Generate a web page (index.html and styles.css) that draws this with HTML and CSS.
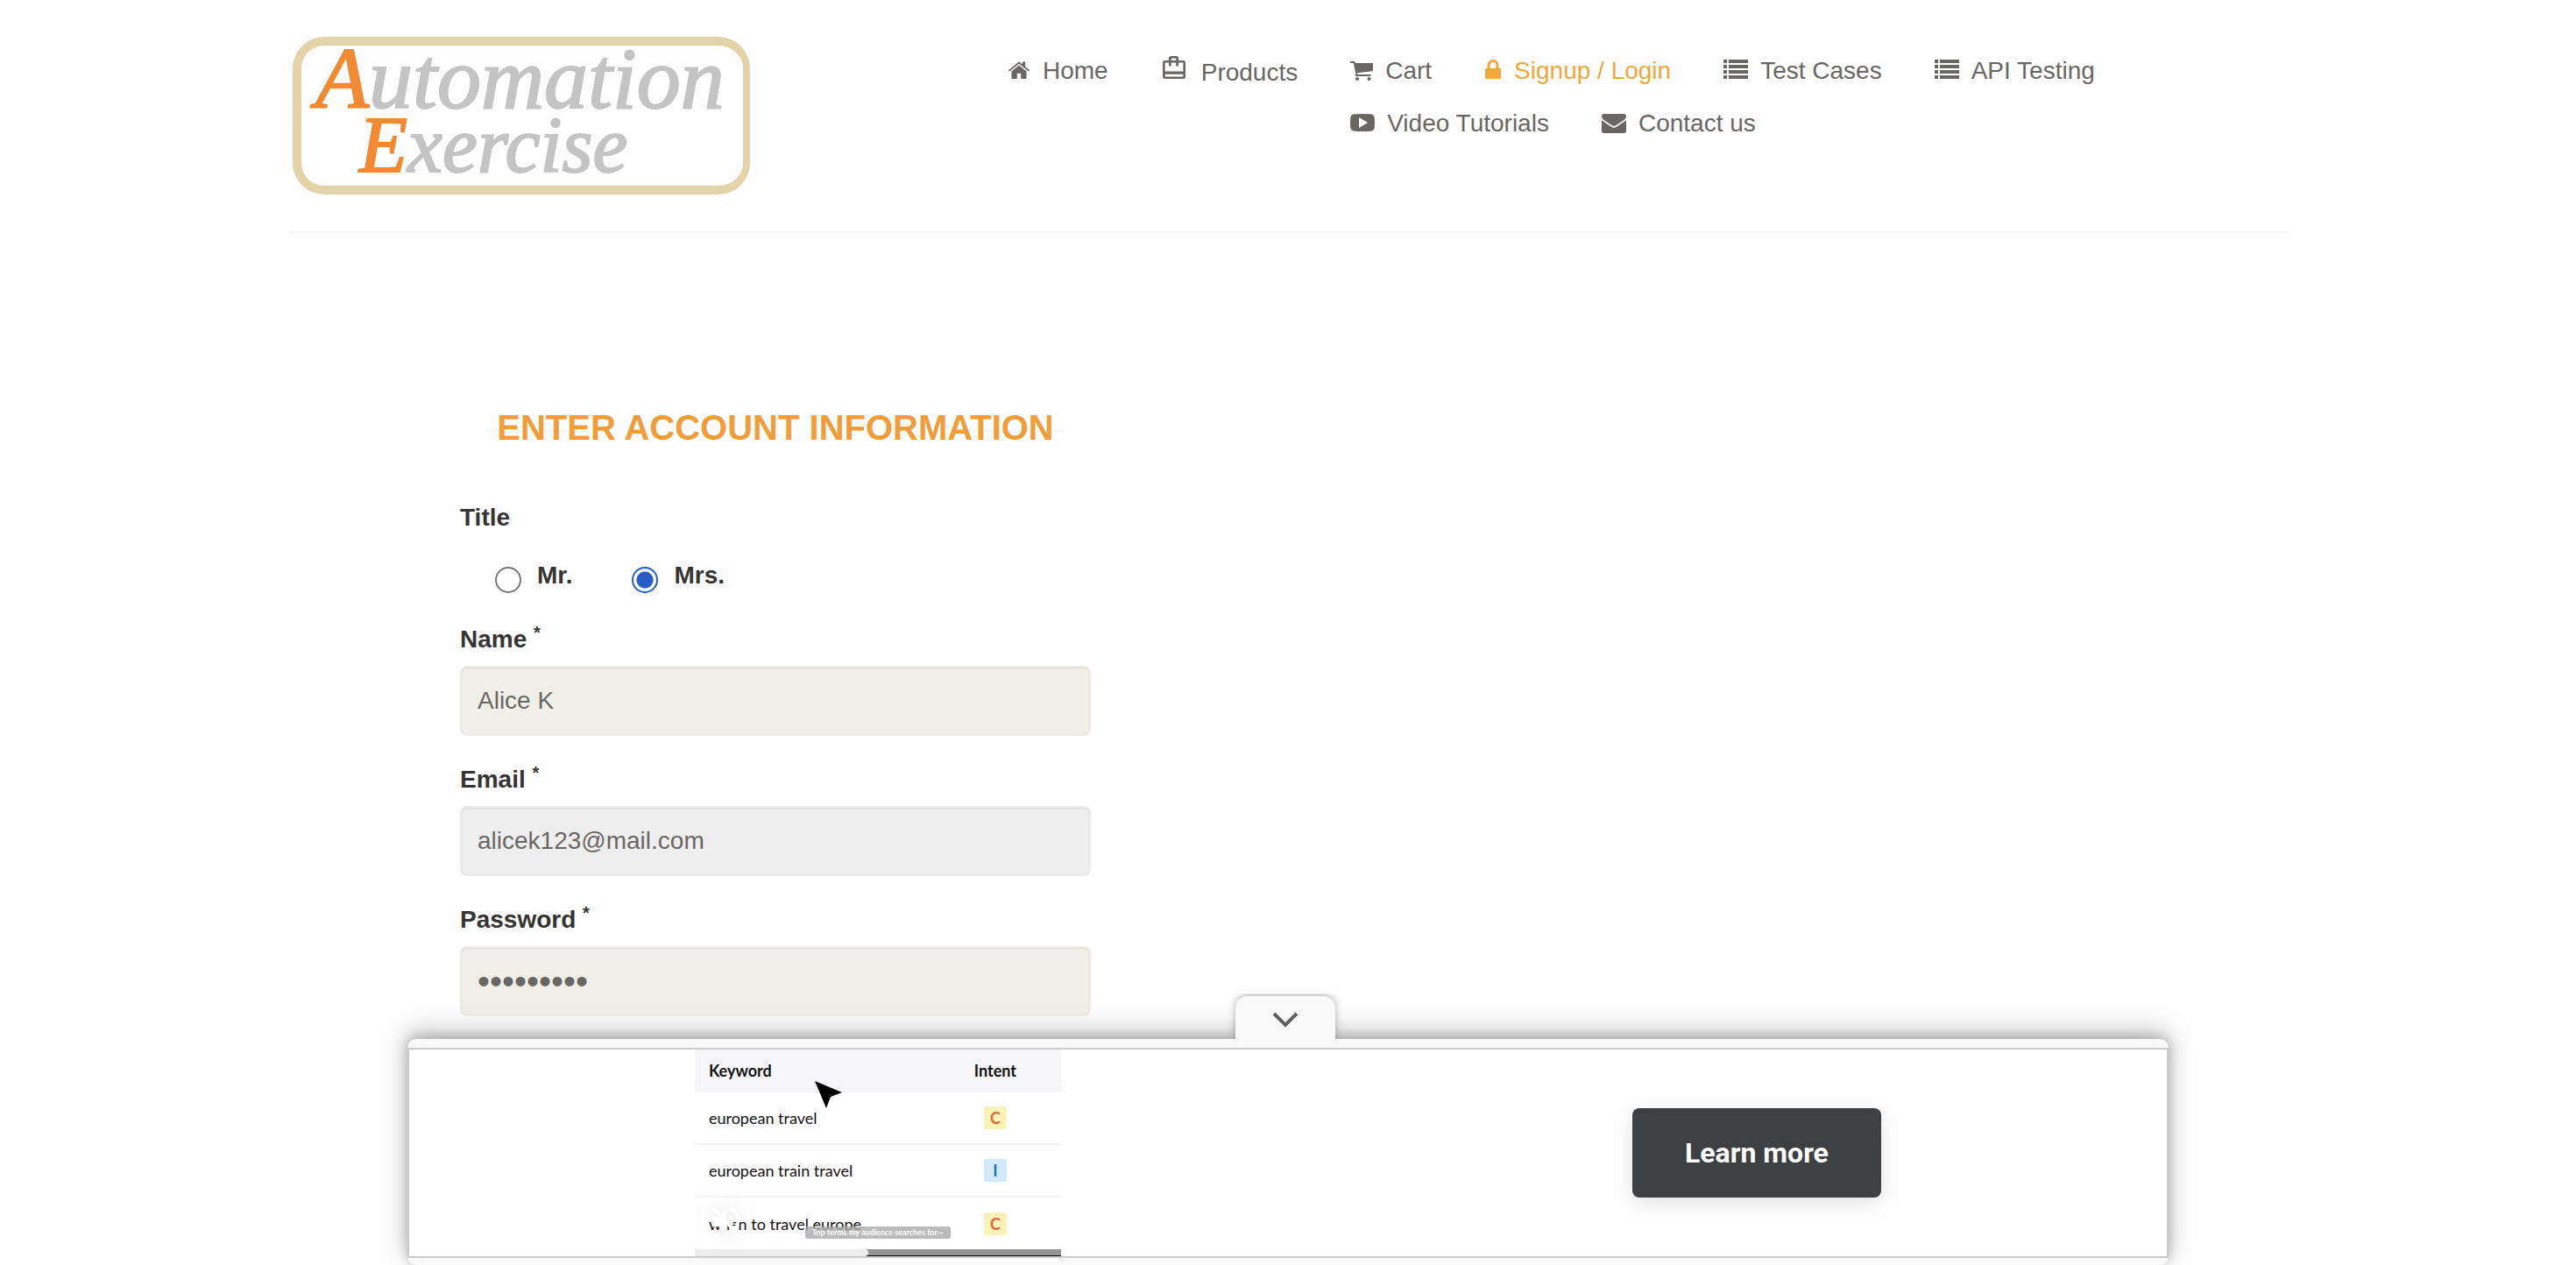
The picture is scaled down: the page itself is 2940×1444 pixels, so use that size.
FILE: index.html
```html
<!DOCTYPE html>
<html lang="en">
<head>
<meta charset="utf-8">
<title>Automation Exercise - Signup</title>
<link rel="stylesheet" href="styles.css">
</head>
<body>
<header class="container">
  <div class="header-row">
    <a class="logo" href="#" aria-label="Automation Exercise">
      <span class="logo-line"><span class="logo-cap">A</span>utomation</span>
      <span class="logo-line logo-second"><span class="logo-cap">E</span>xercise</span>
    </a>
    <nav class="shop-menu">
      <ul>
        <li><a href="#"><svg class="w26" viewBox="0 0 26 28"><path d="M13 8.500L4.500 15.500V23.200Q4.500 24 5.300 24H10.800V17.800H15.200V24H20.700Q21.500 24 21.500 23.200V15.500ZM1 14.200L13 4.200L16.800 7.400V4.500H20.200V10.200L25 14.200L23.800 15.600L13 6.700L2.200 15.600Z"/></svg>Home</a></li>
        <li class="tall"><a href="#"><svg class="w32" viewBox="0 0 32 28"><path fill-rule="evenodd" d="M9 6V3.500Q9 1 11.500 1H17.500Q20 1 20 3.500V6H25.500Q28 6 28 8.500V24.500Q28 27 25.500 27H4.500Q2 27 2 24.500V8.500Q2 6 4.500 6ZM11.700 6H17.300V3.500H11.700ZM4.600 21.700V24.400H25.400V21.700ZM4.600 8.600V18.500H25.400V8.600H20V12.500H17.300V8.600H11.700V12.500H9V8.600Z"/></svg>Products</a></li>
        <li><a href="#"><svg class="w26" viewBox="0 0 26 28"><path d="M0 4H4.500Q5.600 4 5.900 6H26V14Q26 15 25 15.200L8 17.200L8.400 19H23.500V21H6.700Q5.800 21 6 19.800L6.400 18.300L3.700 6H0Z"/><circle cx="8" cy="24" r="2"/><circle cx="21.500" cy="24" r="2"/></svg>Cart</a></li>
        <li><a class="active" href="#"><svg class="w20" viewBox="0 0 20 28"><path fill-rule="evenodd" d="M1 13Q1 12 2 12H3.500V8.500A6.500 6.500 0 0 1 16.500 8.500V12H18Q19 12 19 13V23Q19 24 18 24H2Q1 24 1 23ZM6.500 12H13.500V8.500A3.500 3.500 0 0 0 6.500 8.500Z"/></svg>Signup / Login</a></li>
        <li><a href="#"><svg class="w28" viewBox="0 0 28 28"><path d="M0 2H4V6H0ZM6 2H28V6H6ZM0 8H4V12H0ZM6 8H28V12H6ZM0 14H4V18H0ZM6 14H28V18H6ZM0 20H4V24H0ZM6 20H28V24H6Z"/></svg>Test Cases</a></li>
        <li><a href="#"><svg class="w28" viewBox="0 0 28 28"><path d="M0 2H4V6H0ZM6 2H28V6H6ZM0 8H4V12H0ZM6 8H28V12H6ZM0 14H4V18H0ZM6 14H28V18H6ZM0 20H4V24H0ZM6 20H28V24H6Z"/></svg>API Testing</a></li>
        <li><a href="#"><svg class="w28" viewBox="0 0 28 28"><path fill-rule="evenodd" d="M5 4.300Q14 3.700 23 4.300Q27.300 4.500 27.700 8.500Q28.200 14 27.700 19.500Q27.300 23.500 23 23.700Q14 24.300 5 23.700Q.7 23.500 .3 19.500Q-.2 14 .3 8.500Q.7 4.500 5 4.300ZM10 8V20L20 14Z"/></svg>Video Tutorials</a></li>
        <li><a href="#"><svg class="w28" viewBox="0 0 28 28"><path d="M2.500 4H25.500Q28 4 28 6.500Q28 9 25.500 11L16.500 17Q14 18.700 11.500 17L2.500 11Q0 9 0 6.500Q0 4 2.500 4ZM0 11.200L11 18.800Q14 20.800 17 18.800L28 11.200V23.500Q28 26 25.500 26H2.500Q0 26 0 23.500Z"/></svg>Contact us</a></li>
      </ul>
    </nav>
  </div>
</header>

<main class="container">
  <form class="login-form" action="#">
    <h2><b>Enter Account Information</b></h2>
    <fieldset>
      <legend>Title</legend>
      <div class="radios">
        <label><input type="radio" name="title">Mr.</label>
        <label><input type="radio" name="title" checked>Mrs.</label>
      </div>
    </fieldset>
    <div class="form-group">
      <label for="name">Name <sup>*</sup></label>
      <input id="name" type="text" value="Alice K">
    </div>
    <div class="form-group">
      <label for="email">Email <sup>*</sup></label>
      <input id="email" type="text" value="alicek123@mail.com" disabled>
    </div>
    <div class="form-group">
      <label for="password">Password <sup>*</sup></label>
      <input id="password" type="password" value="abcdefghi">
    </div>
  </form>
</main>

<aside class="anchor-ad">
  <button class="ad-toggle" type="button" aria-label="Collapse">
    <svg viewBox="0 0 32 24"><path d="M3 4L16 17L29 4"/></svg>
  </button>
  <div class="ad-body">
    <div class="video">
      <table>
        <thead><tr><th>Keyword</th><th class="intent">Intent</th></tr></thead>
        <tbody>
          <tr><td>european travel</td><td class="intent"><span class="badge">C</span></td></tr>
          <tr><td>european train travel</td><td class="intent"><span class="badge info">I</span></td></tr>
          <tr><td>when to travel europe</td><td class="intent"><span class="badge">C</span></td></tr>
        </tbody>
      </table>
      <div class="track"><div class="buffer"></div></div>
      <svg class="cursor" viewBox="0 0 32 32"><path d="M0 0L31 13L18 18L13 31Z"/></svg>
      <svg class="mute" viewBox="0 0 36 36"><path d="M2 13H9L18 4V32L9 24H2Z"/><path class="wave" d="M22 12Q26 18 22 24M22 4Q32 8 31 18Q31 24 28 27M3 3L31 33"/></svg>
      <div class="subtitle">Top terms my audience searches for—</div>
    </div>
    <button class="learn" type="button">Learn more</button>
  </div>
</aside>
</body>
</html>
```
FILE: styles.css
```css
* { box-sizing: border-box; }

body {
  margin: 0;
  background: #fefefe;
  color: #363432;
  font-family: "Liberation Sans", Arial, sans-serif;
  font-size: 28px;
  line-height: 40px;
}

.container {
  max-width: 2340px;
  margin: 0 auto;
  padding: 0 30px;
}

/* Header */
.header-row {
  display: flex;
  justify-content: space-between;
  min-height: 266px;
  padding-top: 42px;
  border-bottom: 2px solid #f5f5f5;
}

.logo {
  width: 522px;
  height: 180px;
  margin-left: 4px;
  padding-left: 16px;
  border: 10px solid #e2d3a8;
  border-right-width: 8px;
  border-radius: 36px;
  color: #c4c4c4;
  font-family: "Liberation Serif", "Times New Roman", serif;
  font-style: italic;
  text-decoration: none;
  -webkit-text-stroke: 2px;
}

.logo-line {
  display: block;
  font-size: 100px;
  line-height: 76px;
  white-space: nowrap;
}

.logo-second {
  padding-left: 50px;
  font-size: 90px;
}

.logo-cap { color: #f18a33; }

.shop-menu { width: 1460px; }

.shop-menu ul {
  margin: 0;
  padding: 19px 0 0;
  list-style: none;
}

.shop-menu li {
  float: left;
  height: 60px;
  margin-right: 60px;
}

.shop-menu .tall {
  height: 62px;
  padding-top: 2px;
}

.shop-menu a {
  display: flex;
  gap: 14px;
  color: #696763;
  text-decoration: none;
  white-space: nowrap;
}

.shop-menu a.active { color: #f2a73b; }

.shop-menu svg {
  height: 28px;
  margin-top: 5px;
  fill: currentColor;
}

.shop-menu .tall svg { margin-top: 0; }

.w20 { width: 20px; }
.w26 { width: 26px; }
.w28 { width: 28px; }
.w32 { width: 32px; }

/* Account form */
.login-form {
  width: 720px;
  margin: 200px 0 0 195px;
}

h2 {
  position: relative;
  margin: 0 30px 61px;
  color: #f09e3b;
  font-size: 40px;
  line-height: 44px;
  text-align: center;
  text-transform: uppercase;
  white-space: nowrap;
}

h2 b {
  position: relative;
  z-index: 1;
}

h2::before,
h2::after {
  content: "";
  position: absolute;
  top: 24px;
  left: 0;
  width: 110px;
  height: 4px;
  background: #f7f7f5;
}

h2::after {
  right: 0;
  left: auto;
}

fieldset {
  margin: 0 0 33px;
  padding: 0;
  border: 0;
}

legend,
label { font-weight: bold; }

legend { padding: 0; }

.radios {
  display: flex;
  gap: 68px;
  padding: 26px 0 0 40px;
}

.radios label {
  display: flex;
  gap: 18px;
}

.radios input {
  width: 30px;
  height: 30px;
  margin: 10px 0 0;
  border: 2px solid #767676;
  border-radius: 50%;
  background: #fff;
  appearance: none;
}

.radios input:checked {
  border-color: #265cc6;
  background: radial-gradient(circle, #265cc6 9px, #fff 10px);
}

.form-group { margin-bottom: 30px; }

.form-group label {
  display: block;
  height: 50px;
}

sup {
  font-size: 20px;
  line-height: 0;
}

.form-group input {
  display: block;
  width: 100%;
  height: 80px;
  padding: 0 18px;
  border: 2px solid rgba(0, 0, 0, .01);
  border-radius: 8px;
  background: #f0f0e9;
  box-shadow: inset 0 1px 2px rgba(0, 0, 0, .08);
  color: #696763;
  font: inherit;
}

.form-group input:disabled { background: #eee; }

.form-group input[type="password"] { font-size: 40px; }

/* Anchored advertisement */
.anchor-ad {
  position: fixed;
  right: 0;
  bottom: 0;
  left: 0;
  max-width: 2010px;
  margin: 0 auto;
  padding: 10px 0 8px;
  border-radius: 10px;
  background: #fafafa;
  box-shadow: 0 -8px 30px rgba(0, 0, 0, .26), 0 -2px 14px rgba(0, 0, 0, .2);
}

.ad-toggle {
  position: absolute;
  bottom: 100%;
  left: calc(50% - 60px);
  width: 114px;
  height: 50px;
  padding: 10px 0 0;
  border: 0;
  border-top: 1px solid #ccc;
  border-radius: 14px 14px 0 0;
  background: #fafafa;
  box-shadow: 0 0 10px rgba(0, 0, 0, .3);
  clip-path: inset(-2px -12px 0);
}

.ad-toggle svg {
  width: 32px;
  height: 24px;
  fill: none;
  stroke: #616161;
  stroke-width: 4;
}

.ad-body {
  display: grid;
  grid-template-columns: 8fr 7fr;
  align-items: center;
  justify-items: center;
  border: 2px solid #ccc;
  background: #fff;
}

.video {
  position: relative;
  width: 418px;
  color: #111;
  font-family: Lato, sans-serif;
  font-size: 18px;
  line-height: 24px;
}

table {
  width: 100%;
  border-collapse: collapse;
}

th,
td {
  height: 60px;
  padding: 0 16px;
  border-top: 2px solid #f4f4f5;
  text-align: left;
}

th {
  height: 48px;
  border: 0;
  background: #f6f6f9;
}

.intent {
  width: 150px;
  padding: 0;
  text-align: center;
}

.badge {
  display: inline-block;
  width: 26px;
  border-radius: 3px;
  background: #fdf2b8;
  color: #e5673f;
  font-weight: bold;
  line-height: 26px;
}

.badge.info {
  background: #d0eafc;
  color: #2a6fba;
}

.track {
  height: 8px;
  border-bottom: 1px solid #000;
  background: #959595;
}

.buffer {
  width: 198px;
  height: 8px;
  border-radius: 0 4px 4px 0;
  background: #ededed;
}

.cursor {
  position: absolute;
  top: 36px;
  left: 137px;
  width: 32px;
  height: 32px;
}

.mute {
  position: absolute;
  bottom: 22px;
  left: 18px;
  width: 36px;
  height: 36px;
  overflow: visible;
  fill: #fff;
  filter: drop-shadow(0 0 12px rgba(0, 0, 0, .12));
}

.wave {
  fill: none;
  stroke: #fff;
  stroke-width: 4;
}

.subtitle {
  position: absolute;
  bottom: 20px;
  left: 126px;
  width: 166px;
  border-radius: 3px;
  background: rgba(170, 170, 170, .8);
  color: #fff;
  font-size: 9px;
  font-weight: bold;
  line-height: 14px;
  text-align: center;
  white-space: nowrap;
}

.learn {
  width: 284px;
  height: 102px;
  border: 0;
  border-radius: 8px;
  background: #3d4043;
  box-shadow: 0 6px 24px rgba(0, 0, 0, .12);
  color: #fff;
  font-family: Roboto, sans-serif;
  font-size: 32px;
  font-weight: bold;
}
```
